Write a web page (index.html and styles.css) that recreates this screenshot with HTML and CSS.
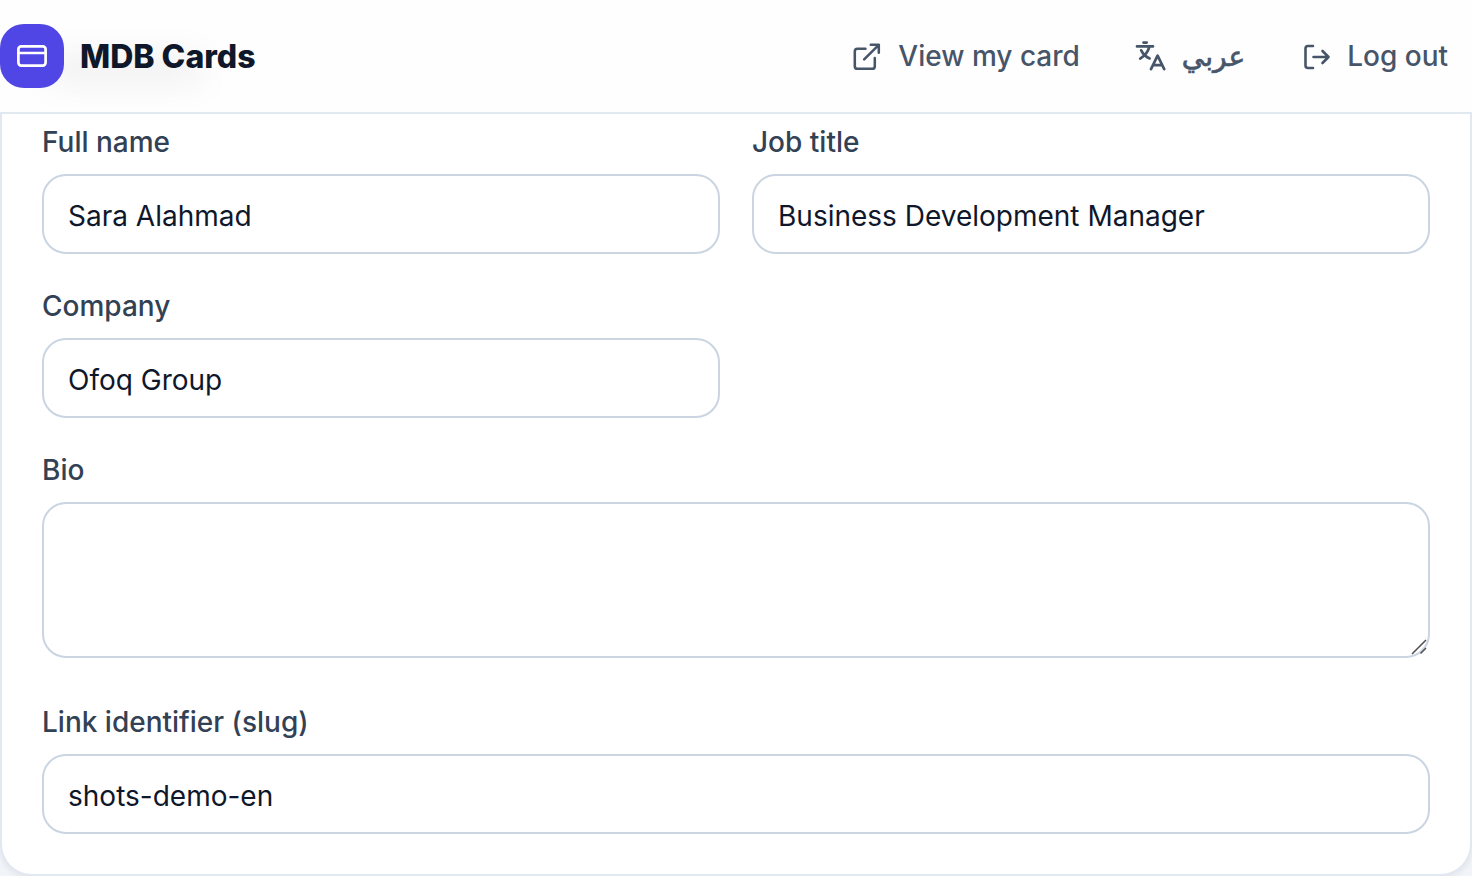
FILE: index.html
```html
<!DOCTYPE html>
<html lang="en">
<head>
    <meta charset="UTF-8">
    <meta name="viewport" content="width=device-width, initial-scale=1.0">
    <title>MDB Cards</title>
    <link rel="stylesheet" href="styles.css">
</head>
<body>

<!-- Top Bar -->
<header class="topbar">
    <a class="brand" href="#">
        <span class="brand-logo">
            <svg width="32" height="32" viewBox="0 0 32 32">
                <rect x="2.4" y="6.4" width="27.2" height="19.2" rx="2.8"/>
                <path d="M2.4 13h27.2"/>
            </svg>
        </span>
        <span class="brand-name">MDB Cards</span>
    </a>
    <nav class="nav">
        <a class="nav-link" href="#">
            <svg width="32" height="32" viewBox="-0.6 -0.6 24 24" stroke-width="1.9">
                <path d="M18 13v6a2 2 0 0 1-2 2H5a2 2 0 0 1-2-2V8a2 2 0 0 1 2-2h6M15 3h6v6M10 14 21 3"/>
            </svg>
            <span>View my card</span>
        </a>
        <a class="nav-link" href="#">
            <svg width="32" height="32" viewBox="0 0 32 32" stroke-width="2.7">
                <path d="M3 6.4h16M9.5 2.6h3.2M15.2 7.2C14 12 10.5 16 6.2 18.6M7.2 10.3C9 14 12 16.8 15.6 18.4"/>
                <path d="M17 29.2l6.6-13.6 6.6 13.6M19.2 25.2h8.8"/>
            </svg>
            <span class="arabic" lang="ar" dir="rtl">عربي</span>
        </a>
        <a class="nav-link" href="#">
            <svg width="32" height="32" viewBox="0 0 32 32" stroke-width="2.6">
                <path d="M14 6H9a2.5 2.5 0 0 0-2.5 2.5v17a2.5 2.5 0 0 0 2.5 2.5h5M14.5 17h15M23.5 11l6 6-6 6"/>
            </svg>
            <span>Log out</span>
        </a>
    </nav>
</header>

<!-- Profile Form -->
<form class="card">
    <div class="field">
        <label for="fullName">Full name</label>
        <input type="text" id="fullName" value="Sara Alahmad">
    </div>
    <div class="field">
        <label for="jobTitle">Job title</label>
        <input type="text" id="jobTitle" value="Business Development Manager">
    </div>
    <div class="field">
        <label for="company">Company</label>
        <input type="text" id="company" value="Ofoq Group">
    </div>
    <div class="field wide bio">
        <label for="bio">Bio</label>
        <div class="textarea-wrap">
            <textarea id="bio"></textarea>
            <svg class="grip" width="16" height="16" viewBox="0 0 16 16">
                <path d="M1 15 15 1M9.5 14.5 15 9"/>
            </svg>
        </div>
    </div>
    <div class="field wide">
        <label for="slug">Link identifier (slug)</label>
        <input type="text" id="slug" value="shots-demo-en">
    </div>
</form>

</body>
</html>
```
FILE: styles.css
```css
* {
    box-sizing: border-box;
}

body {
    font-family: Inter, "DejaVu Sans", sans-serif;
    font-size: 28px;
    line-height: 40px;
    background-color: #f1f5f9;
    color: #0f172a;
    margin: 0;
    height: 876px;
    overflow: hidden;
}

.topbar {
    position: relative;
    display: flex;
    justify-content: space-between;
    align-items: center;
    height: 114px;
    padding-right: 24px;
    background: #fefefe;
    border-bottom: 2px solid #e2e8f0;
    overflow: hidden;
}

/* soft smudge of the heading scrolled under the bar */
.topbar::before {
    content: "";
    position: absolute;
    left: 50px;
    top: 58px;
    width: 150px;
    height: 22px;
    background: rgba(20, 20, 24, 0.08);
    filter: blur(16px);
}

.brand {
    position: relative;
    display: flex;
    align-items: center;
    gap: 16px;
    color: #0f172a;
    text-decoration: none;
}

.brand-logo {
    display: flex;
    align-items: center;
    justify-content: center;
    width: 64px;
    height: 64px;
    border-radius: 24px;
    background: #4f46e5;
    color: #fff;
}

.brand-name {
    padding-top: 2px;
    font-size: 32px;
    font-weight: 800;
}

svg {
    display: block;
    flex: none;
    fill: none;
    stroke: currentColor;
    stroke-linecap: round;
    stroke-linejoin: round;
}

.brand-logo svg {
    stroke-width: 2.7;
}

.nav {
    display: flex;
    align-items: center;
    gap: 54px;
}

.nav-link {
    display: flex;
    align-items: center;
    gap: 16px;
    color: #475569;
    font-weight: 500;
    text-decoration: none;
}

.arabic {
    padding-top: 2px;
    font-family: "DejaVu Sans", sans-serif;
    -webkit-text-stroke: 0.7px currentColor;
}

.card {
    display: grid;
    grid-template-columns: 1fr 1fr;
    gap: 32px;
    height: 762px;
    padding: 8px 40px 40px;
    background: #fff;
    border: 2px solid #e2e8f0;
    border-top: none;
    border-radius: 0 0 32px 32px;
    box-shadow: 0 2px 6px rgba(15, 23, 42, 0.08);
}

.field {
    display: flex;
    flex-direction: column;
    gap: 12px;
}

.wide {
    grid-column: 1 / -1;
}

.bio {
    margin-bottom: 12px;
}

label {
    color: #334155;
    font-weight: 500;
}

input,
textarea {
    display: block;
    width: 100%;
    margin: 0;
    border: 2px solid #cbd5e1;
    border-radius: 24px;
    background: #fff;
    color: #0f172a;
    font-family: inherit;
    font-size: 28px;
    outline: none;
}

input {
    height: 80px;
    padding: 4px 24px 0;
}

textarea {
    height: 156px;
    padding: 16px 24px;
    resize: none;
}

.textarea-wrap {
    position: relative;
}

.grip {
    position: absolute;
    right: 3px;
    bottom: 3px;
    stroke: #555;
    stroke-width: 1.6;
    stroke-linecap: butt;
}
```
